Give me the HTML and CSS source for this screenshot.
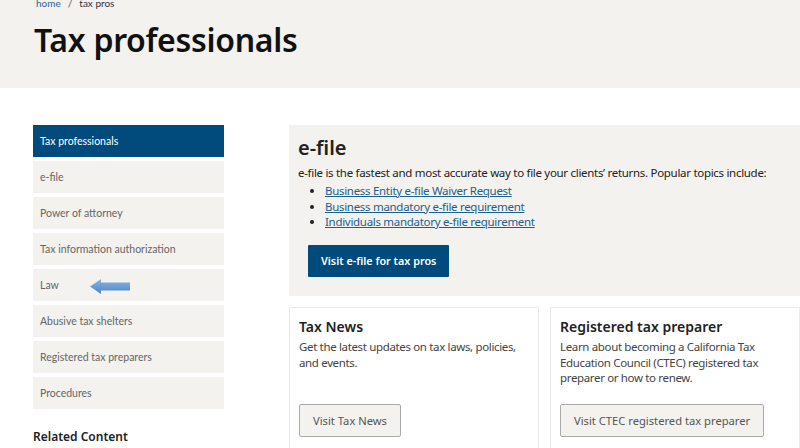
FILE: index.html
```html
<!DOCTYPE html>
<html lang="en">
<head>
<meta charset="utf-8">
<title>Tax professionals</title>
<link rel="stylesheet" href="styles.css">
</head>
<body>
<header class="hero">
  <nav class="crumbs"><a href="#">home</a><span class="sep">/</span><span>tax pros</span></nav>
  <h1 class="title">Tax professionals</h1>
</header>
<div class="layout">
  <aside class="side">
    <ul class="menu">
      <li class="item active">Tax professionals</li>
      <li class="item">e-file</li>
      <li class="item">Power of attorney</li>
      <li class="item">Tax information authorization</li>
      <li class="item law">Law
        <svg class="arrow" width="42" height="17" viewBox="0 0 42 17">
          <defs>
            <linearGradient id="ag" x1="0" y1="0" x2="0" y2="1">
              <stop offset="0" stop-color="#86b6e4"/>
              <stop offset="1" stop-color="#4a86c5"/>
            </linearGradient>
          </defs>
          <path d="M1 8.5 L12 1 L12 4.5 L41 4.5 L41 12.5 L12 12.5 L12 16 Z" fill="url(#ag)"/>
        </svg>
      </li>
      <li class="item">Abusive tax shelters</li>
      <li class="item">Registered tax preparers</li>
      <li class="item">Procedures</li>
    </ul>
    <h2 class="related">Related Content</h2>
  </aside>
  <main class="main">
    <section class="efile">
      <h2 class="efile-title">e-file</h2>
      <p class="efile-text">e-file is the fastest and most accurate way to file your clients’ returns. Popular topics include:</p>
      <ul class="links">
        <li><a href="#">Business Entity e-file Waiver Request</a></li>
        <li><a href="#">Business mandatory e-file requirement</a></li>
        <li><a href="#">Individuals mandatory e-file requirement</a></li>
      </ul>
      <a class="btn-primary" href="#">Visit e-file for tax pros</a>
    </section>
    <div class="cards">
      <section class="card">
        <h3 class="card-title">Tax News</h3>
        <p class="card-text">Get the latest updates on tax laws, policies, and events.</p>
        <a class="btn-secondary" href="#">Visit Tax News</a>
      </section>
      <section class="card">
        <h3 class="card-title">Registered tax preparer</h3>
        <p class="card-text">Learn about becoming a California Tax Education Council (CTEC) registered tax preparer or how to renew.</p>
        <a class="btn-secondary" href="#">Visit CTEC registered tax preparer</a>
      </section>
    </div>
  </main>
</div>
</body>
</html>
```
FILE: styles.css
```css
* { box-sizing: border-box; }
html, body { margin: 0; padding: 0; background: #fff; }
body { font-family: "Noto Sans", sans-serif; color: #222; overflow: hidden; width: 800px; height: 448px; }

.hero { background: #f3f2ee; height: 88px; padding: 0 0 0 34px; }
.crumbs { font-family: Lato, sans-serif; font-size: 10px; line-height: 11px; color: #333; padding-left: 2px; position: relative; top: -2px; }
.crumbs a { color: #2a6496; text-decoration: none; }
.crumbs .sep { margin: 0 7px; color: #555; }
.title { margin: 9px 0 0; font-size: 32px; font-weight: 600; line-height: 40px; color: #111; letter-spacing: -0.3px; }

.layout { display: flex; padding: 37px 0 0 33px; gap: 65px; }
.side { width: 191px; flex: none; }
.menu { list-style: none; margin: 0; padding: 0; display: flex; flex-direction: column; gap: 4px; }
.item { height: 32px; background: #f3f2ee; font-family: Lato, sans-serif; font-size: 10.5px; color: #666; padding-left: 7px; display: flex; align-items: center; }
.item.active { background: #004b7c; color: #fff; }
.law { position: relative; }
.arrow { position: absolute; left: 56px; top: 9px; }
.related { font-size: 12px; font-weight: 600; margin: 19px 0 0; color: #222; }

.main { flex: 1; min-width: 0; display: flex; flex-direction: column; gap: 11px; }
.efile { background: #f3f2ee; height: 171px; padding: 11px 0 0 9px; }
.efile-title { margin: 0; font-size: 20px; font-weight: 600; line-height: 24px; color: #222; }
.efile-text { margin: 5px 0 0; font-size: 11.5px; line-height: 15px; color: #222; letter-spacing: -0.3px; }
.links { margin: 3px 0 0; padding-left: 27px; font-size: 11.5px; line-height: 15.5px; letter-spacing: -0.3px; }
.links a { color: #1d5f8f; text-decoration: underline; }
.btn-primary { display: inline-flex; align-items: center; margin: 15px 0 0 10px; height: 32px; padding: 0 13px; background: #004b7c; color: #fff; font-size: 10.8px; font-weight: 600; text-decoration: none; border-radius: 1px; }

.cards { display: flex; gap: 11px; }
.card { flex: 1; height: 150px; border: 1px solid #ebebeb; padding: 10px 0 0 9px; display: flex; flex-direction: column; }
.card-title { margin: 0; font-size: 14px; font-weight: 600; line-height: 18px; color: #222; }
.card-text { margin: 3px 0 0; font-size: 11.5px; line-height: 15.5px; color: #444; padding-right: 8px; letter-spacing: -0.35px; }
.btn-secondary { align-self: flex-start; margin-top: auto; margin-bottom: 19px; display: inline-flex; align-items: center; height: 33px; padding: 0 13px; border: 1.5px solid #aaa; border-radius: 2px; background: #f3f2ee; color: #555; font-size: 11.2px; text-decoration: none; }
```
